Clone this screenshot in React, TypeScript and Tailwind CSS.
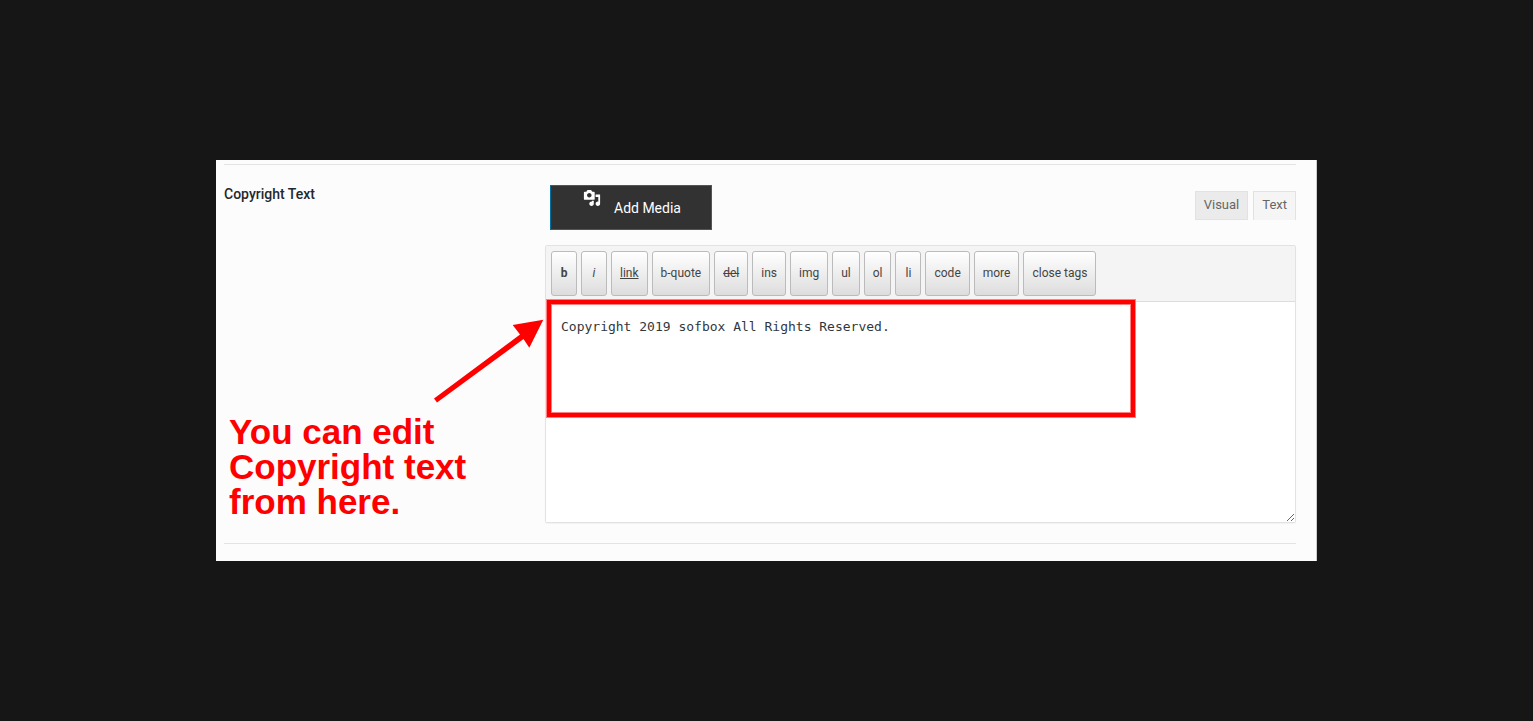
const QUICKTAGS = [
  { label: 'b', style: 'font-bold' },
  { label: 'i', style: 'italic' },
  { label: 'link', style: 'underline' },
  { label: 'b-quote', style: '' },
  { label: 'del', style: 'line-through' },
  { label: 'ins', style: '' },
  { label: 'img', style: '' },
  { label: 'ul', style: '' },
  { label: 'ol', style: '' },
  { label: 'li', style: '' },
  { label: 'code', style: '' },
  { label: 'more', style: '' },
  { label: 'close tags', style: '' },
]

function MediaIcon() {
  return (
    <svg viewBox="0 0 20 20" className="size-[18px]" fill="currentColor" aria-hidden="true">
      <path d="M13 11V4c0-.55-.45-1-1-1h-1.67L9 1H5L3.67 3H2c-.55 0-1 .45-1 1v7c0 .55.45 1 1 1h10c.55 0 1-.45 1-1zM7 4.5c1.38 0 2.5 1.12 2.5 2.5S8.38 9.5 7 9.500 4.5 8.38 4.5 7 5.62 4.5 7 4.5zM14 6h5v10.5c0 1.38-1.12 2.5-2.5 2.5S14 17.88 14 16.5s1.12-2.5 2.5-2.5c.17 0 .34.02.5.05V9h-3V6zm-4 8.05V13h2v3.5c0 1.38-1.12 2.5-2.5 2.5S7 17.88 7 16.5 8.12 14 9.5 14c.17 0 .34.02.5.05z" />
    </svg>
  )
}

function Toolbar() {
  return (
    <div className="flex flex-wrap gap-1 border-b border-[#dddddd] bg-[#f4f4f4] p-[5px]">
      {QUICKTAGS.map((tag) => (
        <button
          key={tag.label}
          type="button"
          className={`h-[45px] min-w-[26px] rounded-[3px] border border-[#bbbbbb] bg-linear-to-b from-white to-[#dddddd] px-2 pb-0.5 text-xs text-[#444444] ${tag.style}`}
        >
          {tag.label}
        </button>
      ))}
    </div>
  )
}

function Editor() {
  return (
    <div className="relative rounded-xs border border-[#e2e2e2] bg-white shadow-[0_1px_1px_rgba(0,0,0,0.04)]">
      <Toolbar />
      <textarea
        id="copyright"
        className="block h-[220px] w-full resize-y bg-white p-[15px] font-['DejaVu_Sans_Mono',monospace] text-[13px] leading-5 text-[#32373c] outline-none"
        defaultValue="Copyright 2019 sofbox All Rights Reserved."
        spellCheck={false}
      />
      <div className="pointer-events-none absolute top-[54px] left-px h-[117px] w-[588px] border-4 border-[#ff0000] shadow-[0_0_0_1px_#ff8080,inset_0_0_0_1px_#ff8080]" />
    </div>
  )
}

function Note() {
  return (
    <div className="mt-[116px] pl-[5px]">
      <svg viewBox="0 0 110 84" className="ml-[205px] h-[84px] w-[110px]" fill="#ff0000" aria-hidden="true">
        <path d="M0 79.500 86 15.500 78.700 6 109.300 .7 95.300 28.700 89.500 20 3 83.500z" />
      </svg>
      <p className="mt-[11px] w-[250px] font-['Liberation_Sans',sans-serif] text-[35px] leading-[35px] font-bold text-[#ff0000]">
        You can edit Copyright text from here.
      </p>
    </div>
  )
}

export default function App() {
  return (
    <main className="flex min-h-screen items-center justify-center bg-[#161616] font-[Roboto,sans-serif]">
      <section className="w-full max-w-[1101px] border-r border-[#cccccc] bg-[#fcfcfc] pt-1 pr-5 pb-[17px] pl-2">
        <div className="flex border-y border-[#e3e3e3] py-5">
          <div className="w-[321px] shrink-0">
            <label htmlFor="copyright" className="block text-sm leading-[18px] font-medium text-[#23282d]">
              Copyright Text
            </label>
            <Note />
          </div>
          <div className="min-w-0 flex-1">
            <div className="mb-[15px] flex items-start justify-between pl-[5px]">
              <button
                type="button"
                className="flex h-[45px] w-[162px] items-start border border-[#0071a1] bg-[#323232] pl-8 text-sm text-white"
              >
                <span className="pt-[3px]">
                  <MediaIcon />
                </span>
                <span className="pt-3 pl-[13px]">Add Media</span>
              </button>
              <div className="mt-1.5 flex gap-[5px] text-[13px] text-[#666666]">
                <button type="button" className="h-[29px] border border-[#e2e2e2] bg-[#ebebeb] px-2 pb-0.5">
                  Visual
                </button>
                <button type="button" className="h-[29px] border border-b-0 border-[#e2e2e2] bg-[#f5f5f5] px-2 pb-0.5">
                  Text
                </button>
              </div>
            </div>
            <Editor />
          </div>
        </div>
      </section>
    </main>
  )
}
